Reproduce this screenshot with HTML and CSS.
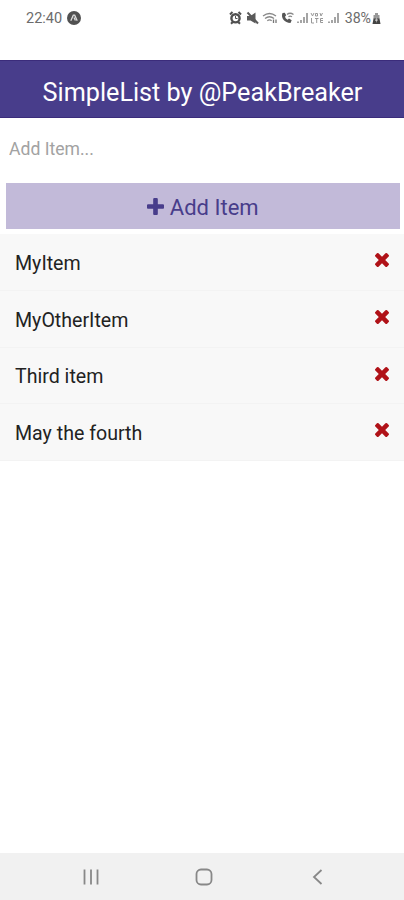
FILE: index.html
```html
<!DOCTYPE html>
<html lang="en">
    <head>
        <meta charset="utf-8">
        <title>SimpleList</title>
        <link rel="stylesheet" href="styles.css">
    </head>
    <body>
        <svg width="0" height="0" class="defs">
            <symbol id="remove" viewBox="302 366 1188 1188"><path d="M1490 1322q0 40-28 68l-136 136q-28 28-68 28t-68-28l-294-294-294 294q-28 28-68 28t-68-28l-136-136q-28-28-28-68t28-68l294-294-294-294q-28-28-28-68t28-68l136-136q28-28 68-28t68 28l294 294 294-294q28-28 68-28t68 28l136 136q28 28 28 68t-28 68l-294 294 294 294q28 28 28 68z"/></symbol>
        </svg>
        <div class="statusbar">
            <span class="time">22:40</span>
            <svg class="expo" width="14" height="14" viewBox="0 0 14 14"><circle cx="7" cy="7" r="7" fill="#515151"/><path d="M3.8 9.7L6.3 4.2h1.4l2.5 5.5M7 6.5l1.4 3" fill="none" stroke="#ddd" stroke-width="1.3"/></svg>
            <svg class="indicators" width="113" height="14" viewBox="0 0 113 14">
                <!-- alarm -->
                <g fill="none" stroke="#505050">
                    <circle cx="6.5" cy="7.3" r="4.1" stroke-width="2.4"/>
                    <path d="M1 3.5L3.5 1M12 3.5L9.5 1M2 12.8l1.8-1.8M11 12.8l-1.8-1.8" stroke-width="2"/>
                    <path d="M6.5 5v2.5h2"/>
                </g>
                <!-- muted -->
                <path d="M18 5h3.5L26.5 1.5v11L21.5 9.5H18z" fill="#5a5a5a"/>
                <path d="M18.5 1.5l10.5 11" fill="none" stroke="#5a5a5a" stroke-width="2"/>
                <!-- wifi -->
                <g fill="none" stroke="#888" stroke-width="1.3">
                    <path d="M34 5q6.5-5 13 0M36 7.5q4.5-3.5 9 0M38.3 9.8q2.2-1.8 4.4 0"/>
                    <path d="M44.5 12V8.5M47 8.5V12" stroke="#777"/>
                </g>
                <!-- wifi calling -->
                <path d="M53.5 2c-2 4.5 2 10 8 10l1.2-2.8-2.7-1.7-1.4 1.2Q56.5 7.5 56 5.7l1.2-1.4L55.8 1.8z" fill="#555"/>
                <path d="M58 3.5q3-2.5 6.5 0M59.5 5.7q1.5-1.2 3.5 0" fill="none" stroke="#888" stroke-width="1.3"/>
                <!-- sim 1 -->
                <path d="M69 12v-1.5M72 12V9M75 12V6M78 12V2" fill="none" stroke="#888" stroke-width="1.5"/>
                <!-- volte -->
                <g fill="none" stroke="#999" stroke-width="1">
                    <path d="M82 2l1.5 3L85 2M86.5 2.5h2v2.5h-2zM91 2l1 3 1.5-3M82.5 7v5h2.5M86 7.5h3.5M87.7 7.5V12M94 7.5h-2.5v4H94M91.5 9.5H94"/>
                </g>
                <!-- sim 2 -->
                <path d="M100 12v-1.5M103 12V9M106 12V6M109 12V2" fill="none" stroke="#888" stroke-width="1.5"/>
            </svg>
            <span class="percent">38%</span>
            <svg class="battery" width="9" height="13" viewBox="0 0 9 13"><path d="M3 1h3v2h1.5v4H1.5V3H3z" fill="#999"/><path d="M1.5 6.5h6L8.5 12h-8z" fill="#444"/><path d="M4.8 5L3 8.7h1.5L4 11l2-3.5H4.5z" fill="#ddd"/></svg>
        </div>
        <header class="header">SimpleList by @PeakBreaker</header>
        <main>
            <input class="new-item" type="text" placeholder="Add Item...">
            <button class="add">
                <svg width="17" height="17" viewBox="192 128 1408 1408"><path d="M1600 736v192q0 40-28 68t-68 28h-416v416q0 40-28 68t-68 28h-192q-40 0-68-28t-28-68v-416h-416q-40 0-68-28t-28-68v-192q0-40 28-68t68-28h416v-416q0-40 28-68t68-28h192q40 0 68 28t28 68v416h416q40 0 68 28t28 68z"/></svg>
                <span>Add Item</span>
            </button>
            <ul class="items">
                <li><span>MyItem</span><svg class="remove"><use href="#remove"/></svg></li>
                <li><span>MyOtherItem</span><svg class="remove"><use href="#remove"/></svg></li>
                <li><span>Third item</span><svg class="remove"><use href="#remove"/></svg></li>
                <li><span>May the fourth</span><svg class="remove"><use href="#remove"/></svg></li>
            </ul>
        </main>
        <nav class="navbar">
            <svg width="18" height="18" viewBox="0 0 18 18"><path d="M2.5 1.5v15M9 1.5v15M15.5 1.5v15"/></svg>
            <svg width="18" height="18" viewBox="0 0 18 18"><rect x="1.5" y="1.5" width="15" height="15" rx="4.5"/></svg>
            <svg width="18" height="18" viewBox="0 0 18 18"><path d="M12.5 2L5 9l7.5 7"/></svg>
        </nav>
    </body>
</html>
```

FILE: styles.css
```css
* {box-sizing:border-box;}
body {margin:0;height:900px;display:flex;flex-direction:column;background:#fff;font-family:Roboto, sans-serif;overflow:hidden;}
main {flex:1;display:flex;flex-direction:column;}
.defs {display:none;}

.statusbar {height:60px;padding:10px 23px 0 26px;display:flex;align-items:flex-start;color:#6c6c6c;font-size:14.5px;line-height:17px;}
.expo {margin:1px 0 0 5px;}
.indicators {margin:1px 0 0 auto;}
.percent {margin-left:3px;font-size:14.2px;}
.battery {margin:2px 0 0 1px;}

.header {height:58px;padding-left:1px;background:#483d8b;border-top:1px solid #3b2c7b;border-bottom:1px solid #3b2c7b;color:#fff;font-size:25.2px;line-height:64px;text-align:center;}

.new-item {height:60px;margin:0;padding:2px 9px 0;border:0;outline:0;background:none;font:17.6px Roboto, sans-serif;color:#222;}
.new-item::placeholder {color:#a2a2a2;}

.add {height:46px;margin:5px 4px 0 5.5px;padding:2px 0 0;border:0;background:#c2bad9;color:#483d8b;display:flex;align-items:center;justify-content:center;gap:6px;font:22px Roboto, sans-serif;}
.add svg {fill:#483d8b;margin-bottom:1px;}

.items {list-style:none;margin:5px 0 0;padding:0;}
.items li {height:56.8px;padding:3px 15px 0;display:flex;justify-content:space-between;align-items:center;background:#f8f8f8;border-bottom:1px solid #f3f3f3;color:#222;font-size:19.6px;}
.remove {width:14px;height:14px;margin-bottom:6.8px;fill:#b01218;}

.navbar {height:47px;padding:0 77px 0 82px;display:flex;justify-content:space-between;align-items:center;background:#f1f1f1;}
.navbar svg {fill:none;stroke:#888;stroke-width:1.8;}
.navbar svg:nth-child(2) {margin-right:1px;}
```
